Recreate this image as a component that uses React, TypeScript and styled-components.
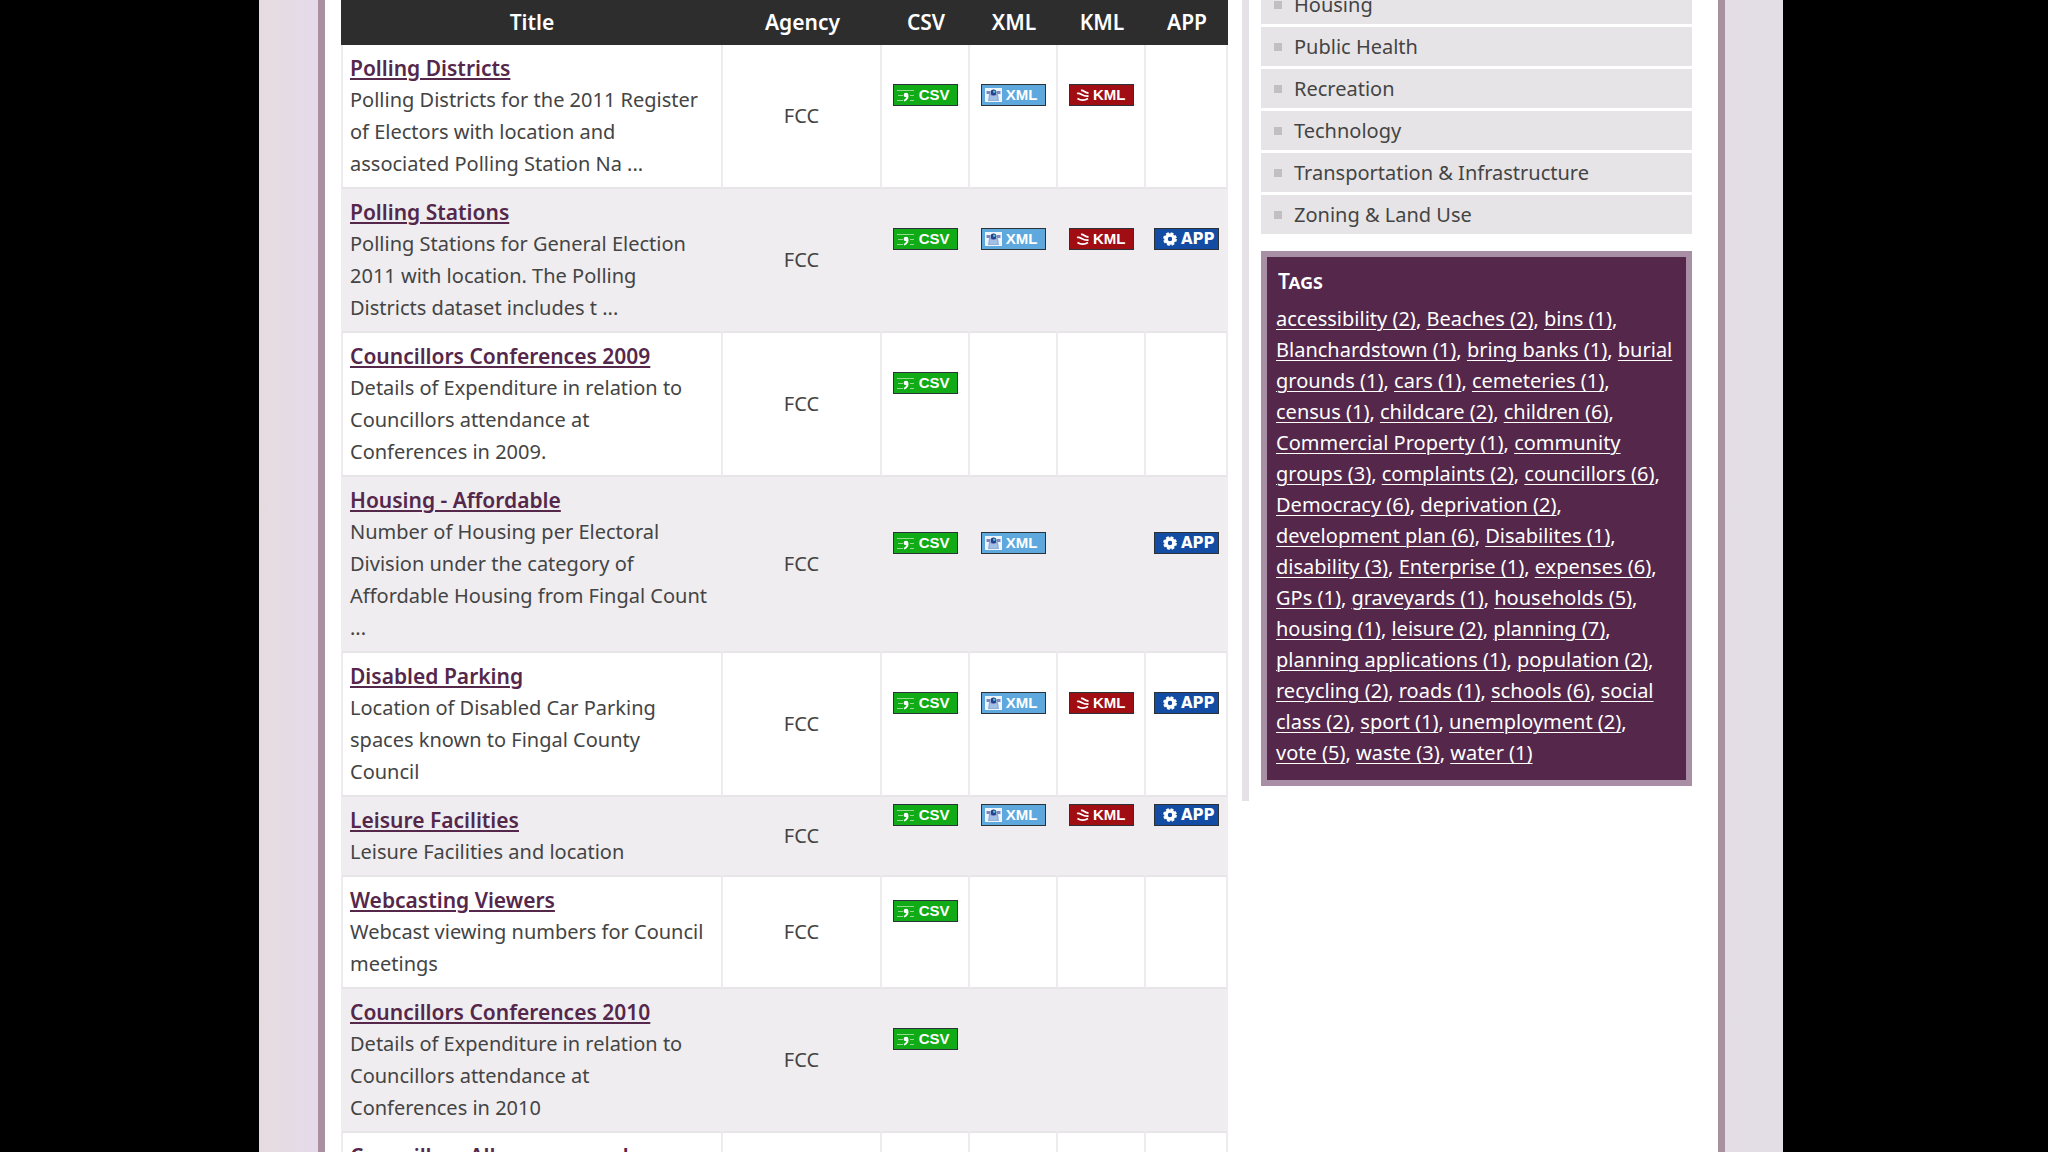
import React from "react";
import styled, { createGlobalStyle } from "styled-components";

const GlobalStyle = createGlobalStyle`
  * {
    box-sizing: border-box;
  }

  body {
    margin: 0;
    background: #000;
    color: #444;
    font: 400 20px/32px "Noto Sans", "Open Sans", sans-serif;
  }
`;

const Screen = styled.div`
  height: 100vh;
  overflow: hidden;
  padding: 0 265px 0 259px;
`;

const Backdrop = styled.div`
  height: 100%;
  padding: 0 58px 0 59px;
  background: linear-gradient(90deg, #e6dcdf 0, #e5dae9 59px, #e3dde6 100%);
`;

const Page = styled.main`
  display: flex;
  align-items: flex-start;
  height: 100%;
  padding: 0 26px 0 16px;
  border: solid #a8909f;
  border-width: 0 7px;
  background: #fff;
`;

const Datasets = styled.table`
  flex: 1;
  table-layout: fixed;
  border-collapse: separate;
  border-spacing: 0;
`;

const TitleCol = styled.col``;

const AgencyCol = styled.col`
  width: 159px;
`;

const FormatCol = styled.col<{ $last?: boolean }>`
  width: ${(p) => (p.$last ? 82 : 88)}px;
`;

const HeadCell = styled.th`
  height: 45px;
  padding: 0 0 2px;
  background: #2e2d2e;
  color: #fff;
  font-size: 21px;
  font-weight: 600;
`;

const Cell = styled.td`
  padding: 7px 6px;
  border: solid #eeebef;
  border-width: 0 2px 2px 0;
  text-align: center;
  vertical-align: middle;

  &:first-child {
    padding-right: 12px;
    padding-left: 7px;
    border-left-width: 2px;
    text-align: left;
  }
`;

const Row = styled.tr`
  &:nth-child(even) ${Cell} {
    background: #efedf0;
    border-color: #efedf0;
    border-bottom-color: #e8e5e9;
  }

  &:nth-child(odd) ${Cell} {
    border-bottom-color: #e8e5e9;
  }
`;

const DatasetLink = styled.a`
  display: block;
  color: #54274b;
  font-size: 21px;
  font-weight: 600;
  text-decoration: underline;
  text-decoration-thickness: 2px;
  text-underline-offset: 2px;
`;

const Summary = styled.p`
  margin: 0;
`;

type Format = "CSV" | "XML" | "KML" | "APP";

const badgeColours: Record<Format, string> = {
  CSV: "#12ab18",
  XML: "#5ea8de",
  KML: "#a00d12",
  APP: "#124ca3",
};

const Badge = styled.a<{ $format: Format }>`
  display: flex;
  align-items: center;
  justify-content: space-between;
  width: 65px;
  height: 22px;
  margin: 0 auto 42px;
  padding: 0 7px 0 3px;
  border: 1px solid #2c3338;
  background: ${(p) => badgeColours[p.$format]};
  color: #fff;
  font: 700 15px/20px "Liberation Sans", sans-serif;
  text-decoration: none;

  ${(p) =>
    p.$format === "APP" &&
    `padding: 0 3px 0 8px; font-family: "DejaVu Sans", sans-serif;`}
  ${(p) => p.$format === "KML" && `padding-left: 6px;`}
`;

const Glyph = styled.svg`
  display: block;
  flex: none;
`;

function FormatIcon({ format }: { format: Format }) {
  if (format === "CSV") {
    return (
      <Glyph width="18" height="16" viewBox="0 0 18 16" aria-hidden="true">
        <path d="M0 3.500h17M1 8.500h5M13 8.500h4M0 13.500h6M13 13.500h4" stroke="#8fdc8c" strokeWidth="1" />
        <circle cx="9" cy="8" r="2.300" fill="#fff" />
        <path d="M10.300 7.500c.8 2.800-.6 5-3.300 6.200" fill="none" stroke="#fff" strokeWidth="1.800" />
      </Glyph>
    );
  }
  if (format === "XML") {
    return (
      <Glyph width="17" height="14" viewBox="0 0 17 14" aria-hidden="true">
        <path d="M0 0h17v14H0z" fill="#eef5fd" />
        <path d="M4 6h9l1 7H3z" fill="#8fb0dc" />
        <path d="M1.500 3h3.500v3h-3.500zM12 3h3.500v3h-3.500z" fill="#7b86c8" />
        <circle cx="8.500" cy="4.500" r="3" fill="#27418f" />
        <circle cx="9.200" cy="3.800" r="1.200" fill="#55c7ca" />
        <path d="M5 9h7M5 11h7" stroke="#b9cfec" />
      </Glyph>
    );
  }
  if (format === "KML") {
    return (
      <Glyph width="14" height="14" viewBox="0 0 14 14" aria-hidden="true">
        <path
          d="M5 2.500C8 2 8.500 5 12.500 5M1 5.500C5 4 6 9 12.500 8M1.500 10.500c3 2 7.500 2 10.500 0"
          fill="none"
          stroke="#fff"
          strokeWidth="1.800"
        />
      </Glyph>
    );
  }
  return (
    <Glyph width="14" height="14" viewBox="0 0 14 14" aria-hidden="true">
      <circle cx="7" cy="7" r="4" fill="none" stroke="#fff" strokeWidth="3.600" />
      <circle cx="7" cy="7" r="5.800" fill="none" stroke="#fff" strokeWidth="2.200" strokeDasharray="2.700 1.855" />
    </Glyph>
  );
}

const Sidebar = styled.aside`
  flex: 0 0 450px;
  margin-left: 14px;
  padding: 0 0 15px 12px;
  border-left: 7px solid #e5e2e7;
`;

const Categories = styled.ul`
  display: grid;
  gap: 3px;
  margin: -15px 0 17px;
  padding: 0;
  list-style: none;
`;

const Category = styled.li`
  display: flex;
  align-items: center;
  gap: 12px;
  height: 39px;
  padding-left: 13px;
  background: #e7e4e7;

  &::before {
    content: "";
    width: 8px;
    height: 8px;
    background: #c2bfc3;
  }
`;

const CategoryLink = styled.a`
  color: #444;
  text-decoration: none;
`;

const TagPanel = styled.section`
  padding: 8px 12px 12px 9px;
  border: 6px solid #a88fa5;
  background: #54274b;
  color: #fff;
`;

const TagHeading = styled.h2`
  margin: 0 2px 6px;
  font-size: 21px;
  font-weight: 600;
  font-variant: small-caps;
`;

const TagCloud = styled.p`
  margin: 0;
  line-height: 31px;
`;

const TagLink = styled.a`
  color: #fff;
  text-decoration: underline;
  text-decoration-thickness: 1px;
  text-underline-offset: 3px;
`;

const formats: Format[] = ["CSV", "XML", "KML", "APP"];

const datasets: { title: string; summary: string; has: Format[] }[] = [
  {
    title: "Polling Districts",
    summary: "Polling Districts for the 2011 Register of Electors with location and associated Polling Station Na ...",
    has: ["CSV", "XML", "KML"],
  },
  {
    title: "Polling Stations",
    summary: "Polling Stations for General Election 2011 with location. The Polling Districts dataset includes t ...",
    has: ["CSV", "XML", "KML", "APP"],
  },
  {
    title: "Councillors Conferences 2009",
    summary: "Details of Expenditure in relation to Councillors attendance at Conferences in 2009.",
    has: ["CSV"],
  },
  {
    title: "Housing - Affordable",
    summary: "Number of Housing per Electoral Division under the category of Affordable Housing from Fingal Count ...",
    has: ["CSV", "XML", "APP"],
  },
  {
    title: "Disabled Parking",
    summary: "Location of Disabled Car Parking spaces known to Fingal County Council",
    has: ["CSV", "XML", "KML", "APP"],
  },
  {
    title: "Leisure Facilities",
    summary: "Leisure Facilities and location",
    has: ["CSV", "XML", "KML", "APP"],
  },
  {
    title: "Webcasting Viewers",
    summary: "Webcast viewing numbers for Council meetings",
    has: ["CSV"],
  },
  {
    title: "Councillors Conferences 2010",
    summary: "Details of Expenditure in relation to Councillors attendance at Conferences in 2010",
    has: ["CSV"],
  },
  { title: "Councillors Allowances and", summary: "", has: [] },
];

const categories = [
  "Housing",
  "Public Health",
  "Recreation",
  "Technology",
  "Transportation & Infrastructure",
  "Zoning & Land Use",
];

const tags: [string, number][] = [
  ["accessibility", 2], ["Beaches", 2], ["bins", 1], ["Blanchardstown", 1],
  ["bring banks", 1], ["burial grounds", 1], ["cars", 1], ["cemeteries", 1],
  ["census", 1], ["childcare", 2], ["children", 6], ["Commercial Property", 1],
  ["community groups", 3], ["complaints", 2], ["councillors", 6], ["Democracy", 6],
  ["deprivation", 2], ["development plan", 6], ["Disabilites", 1], ["disability", 3],
  ["Enterprise", 1], ["expenses", 6], ["GPs", 1], ["graveyards", 1],
  ["households", 5], ["housing", 1], ["leisure", 2], ["planning", 7],
  ["planning applications", 1], ["population", 2], ["recycling", 2], ["roads", 1],
  ["schools", 6], ["social class", 2], ["sport", 1], ["unemployment", 2],
  ["vote", 5], ["waste", 3], ["water", 1],
];

export default function App() {
  return (
    <Screen>
      <GlobalStyle />
      <Backdrop>
        <Page>
          <Datasets>
            <colgroup>
              <TitleCol />
              <AgencyCol />
              {formats.map((f) => (
                <FormatCol key={f} $last={f === "APP"} />
              ))}
            </colgroup>
            <thead>
              <tr>
                <HeadCell scope="col">Title</HeadCell>
                <HeadCell scope="col">Agency</HeadCell>
                {formats.map((f) => (
                  <HeadCell key={f} scope="col">{f}</HeadCell>
                ))}
              </tr>
            </thead>
            <tbody>
              {datasets.map((d) => (
                <Row key={d.title}>
                  <Cell>
                    <DatasetLink href="#">{d.title}</DatasetLink>
                    <Summary>{d.summary}</Summary>
                  </Cell>
                  <Cell>{d.summary && "FCC"}</Cell>
                  {formats.map((f) => (
                    <Cell key={f}>
                      {d.has.includes(f) && (
                        <Badge href="#" $format={f}>
                          <FormatIcon format={f} />
                          {f}
                        </Badge>
                      )}
                    </Cell>
                  ))}
                </Row>
              ))}
            </tbody>
          </Datasets>
          <Sidebar>
            <Categories>
              {categories.map((c) => (
                <Category key={c}>
                  <CategoryLink href="#">{c}</CategoryLink>
                </Category>
              ))}
            </Categories>
            <TagPanel>
              <TagHeading>Tags</TagHeading>
              <TagCloud>
                {tags.map(([name, count], i) => (
                  <React.Fragment key={name}>
                    <TagLink href="#">{`${name}\u00a0(${count})`}</TagLink>
                    {i < tags.length - 1 && ", "}
                  </React.Fragment>
                ))}
              </TagCloud>
            </TagPanel>
          </Sidebar>
        </Page>
      </Backdrop>
    </Screen>
  );
}
